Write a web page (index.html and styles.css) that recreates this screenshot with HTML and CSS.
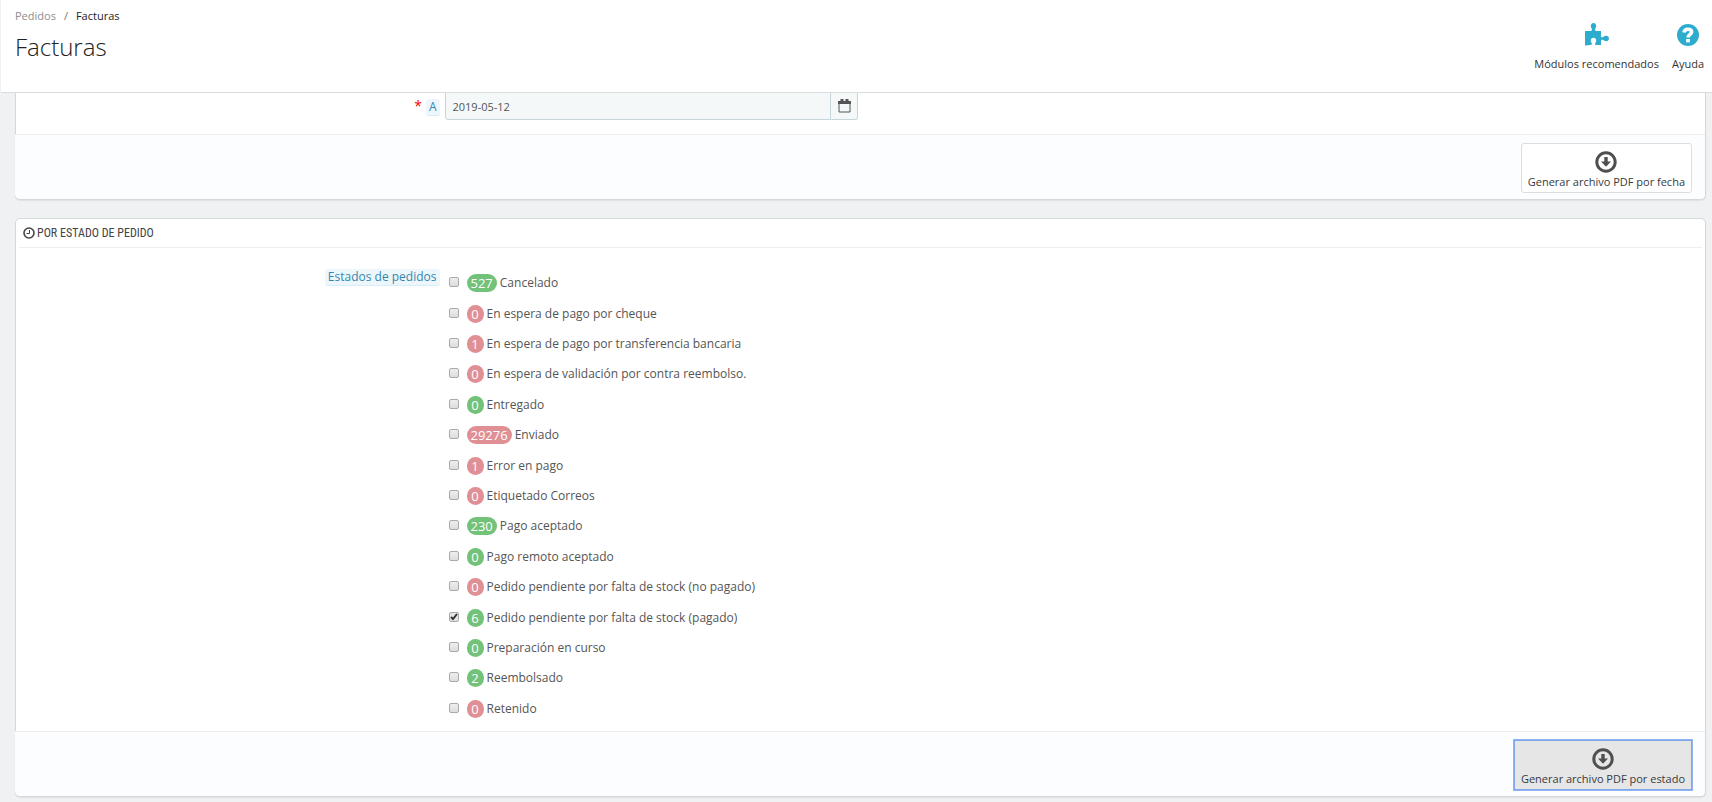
FILE: index.html
```html
<!DOCTYPE html>
<html lang="es">
<head>
<meta charset="utf-8">
<title>Facturas</title>
<link rel="stylesheet" href="styles.css">
</head>
<body>

<header class="page-head">
  <div>
    <nav class="breadcrumb">
      <a href="#">Pedidos</a>
      <span class="sep">/</span>
      <a href="#" class="current">Facturas</a>
    </nav>
    <h1 class="page-title">Facturas</h1>
  </div>
  <div class="toolbar">
    <a href="#" class="toolbar-btn">
      <svg class="toolbar-icon" viewBox="0 0 24 24"><path d="M0 8H5.500C7 8 7.300 7 6.800 5.800C6.200 4.700 5.800 4 5.800 2.900C5.800 1.200 7 0 8.500 0S11.200 1.200 11.200 2.900C11.200 4 10.800 4.700 10.200 5.800C9.700 7 10 8 11.500 8H16V13C16 14.500 17 14.700 18.200 14C19.300 13.200 19.900 12.700 21 12.700C22.800 12.700 24 13.900 24 15.500S22.800 18.300 21 18.300C19.900 18.300 19.300 17.800 18.200 17.100C17 16.400 16 16.700 16 18.200V22H11.500C10 22 9.700 21.200 10.300 20C10.900 19 11.200 18.600 11.200 17.400C11.200 15.800 10.200 14.700 8.500 14.700S5.800 15.800 5.800 17.400C5.800 18.600 6.100 19 6.700 20C7.300 21.200 6.800 21.800 5.500 22L0 22.500Z"/></svg>
      Módulos recomendados
    </a>
    <a href="#" class="toolbar-btn">
      <svg class="toolbar-icon" viewBox="0 0 24 24"><circle cx="12" cy="12" r="11"/><path class="mark" d="M8 9.500C8.300 7.300 9.700 6.300 12 6.300C14.300 6.300 15.600 7.400 15.600 9.100C15.600 11.400 12 11.400 12 14.600"/><rect class="dot" x="10.200" y="16" width="3.600" height="3.400"/></svg>
      Ayuda
    </a>
  </div>
</header>

<main class="content">
  <form class="panel">
    <div class="form-group form-date">
      <label class="control-label required" for="date_to"><span class="label-tooltip">A</span></label>
      <div class="input-group">
        <input type="text" id="date_to" class="form-control" value="2019-05-12">
        <span class="input-addon">
          <svg class="icon-calendar" viewBox="0 0 13 14"><path d="M1 3H12V13H1Z" class="line"/><path d="M0 2H13V5H0Z"/><path d="M2.500 0H5.500V3H2.500ZM7.500 0H10.500V3H7.500Z"/></svg>
        </span>
      </div>
    </div>
    <div class="panel-footer">
      <button type="button" class="btn">
        <svg class="btn-icon" viewBox="0 0 22 22"><circle cx="11" cy="11" r="9.200"/><path d="M9.300 6H12.700V10.500H16L11 15.700L6 10.500H9.300Z"/></svg>
        Generar archivo PDF por fecha
      </button>
    </div>
  </form>

  <form class="panel">
    <h3 class="panel-heading">
      <svg class="icon-time" viewBox="0 0 12 12"><circle cx="6" cy="6" r="5"/><path d="M6.500 3V6.500H3.500"/></svg>
      Por estado de pedido
    </h3>
    <div class="form-group">
      <div class="control-label"><span class="label-tooltip">Estados de pedidos</span></div>
      <div class="states">
        <label class="state"><input type="checkbox"><span class="badge badge-success">527</span> Cancelado</label>
        <label class="state"><input type="checkbox"><span class="badge badge-danger">0</span> En espera de pago por cheque</label>
        <label class="state"><input type="checkbox"><span class="badge badge-danger">1</span> En espera de pago por transferencia bancaria</label>
        <label class="state"><input type="checkbox"><span class="badge badge-danger">0</span> En espera de validación por contra reembolso.</label>
        <label class="state"><input type="checkbox"><span class="badge badge-success">0</span> Entregado</label>
        <label class="state"><input type="checkbox"><span class="badge badge-danger">29276</span> Enviado</label>
        <label class="state"><input type="checkbox"><span class="badge badge-danger">1</span> Error en pago</label>
        <label class="state"><input type="checkbox"><span class="badge badge-danger">0</span> Etiquetado Correos</label>
        <label class="state"><input type="checkbox"><span class="badge badge-success">230</span> Pago aceptado</label>
        <label class="state"><input type="checkbox"><span class="badge badge-success">0</span> Pago remoto aceptado</label>
        <label class="state"><input type="checkbox"><span class="badge badge-danger">0</span> Pedido pendiente por falta de stock (no pagado)</label>
        <label class="state"><input type="checkbox" checked><span class="badge badge-success">6</span> Pedido pendiente por falta de stock (pagado)</label>
        <label class="state"><input type="checkbox"><span class="badge badge-success">0</span> Preparación en curso</label>
        <label class="state"><input type="checkbox"><span class="badge badge-success">2</span> Reembolsado</label>
        <label class="state"><input type="checkbox"><span class="badge badge-danger">0</span> Retenido</label>
      </div>
    </div>
    <div class="panel-footer">
      <button type="button" class="btn btn-active">
        <svg class="btn-icon" viewBox="0 0 22 22"><circle cx="11" cy="11" r="9.200"/><path d="M9.300 6H12.700V10.500H16L11 15.700L6 10.500H9.300Z"/></svg>
        Generar archivo PDF por estado
      </button>
    </div>
  </form>
</main>

</body>
</html>
```
FILE: styles.css
```css
* {
  box-sizing: border-box;
}
body {
  margin: 0;
  background: #eff1f2;
  color: #555;
  font-family: "Open Sans", Helvetica, Arial, sans-serif;
  font-size: 12px;
  line-height: 18px;
}
a {
  color: inherit;
  text-decoration: none;
}

/* header */
.page-head {
  position: sticky;
  top: 0;
  z-index: 10;
  display: flex;
  justify-content: space-between;
  height: 93px;
  margin-left: 1px;
  padding: 7px 8px 0 14px;
  background: #fff;
  border-bottom: 1px solid #d9dbdd;
}
.breadcrumb {
  display: flex;
  gap: 8px;
  font-size: 11px;
  color: #8d8f92;
}
.breadcrumb .current {
  color: #222;
}
.breadcrumb .sep {
  color: #777;
}
.page-title {
  margin: 6px 0 0;
  font-size: 24px;
  font-weight: 300;
  line-height: 32px;
  color: #222;
}
.toolbar {
  display: flex;
  gap: 13px;
  padding-top: 16px;
}
.toolbar-btn {
  display: flex;
  flex-direction: column;
  align-items: center;
  gap: 8px;
  font-size: 11px;
  color: #333;
}
.toolbar-icon {
  width: 24px;
  height: 24px;
  fill: #2eacce;
}
.toolbar-icon .mark {
  fill: none;
  stroke: #fff;
  stroke-width: 3.6;
}
.toolbar-icon .dot {
  fill: #fff;
}

/* panels */
.content {
  margin-top: -5px;
  padding: 0 6px 0 15px;
}
.panel {
  margin-bottom: 18px;
  background: #fff;
  border: 1px solid #d3d8db;
  border-radius: 5px;
  box-shadow: 0 1px 1px #dfe1e3;
}
.panel-heading {
  display: flex;
  align-items: center;
  gap: 2px;
  margin: 0 3px 20px;
  padding: 0 4px;
  height: 29px;
  border-bottom: 1px solid #eee;
  font-family: "Ubuntu Condensed", "Roboto Condensed", Roboto, sans-serif;
  font-size: 12px;
  font-weight: 400;
  text-transform: uppercase;
  color: #444;
}
.icon-time {
  width: 12px;
  height: 12px;
  fill: none;
  stroke: #444;
  stroke-width: 1.6;
}
.icon-time path {
  stroke-width: 1;
}
.panel-footer {
  display: flex;
  justify-content: flex-end;
  height: 65px;
  margin-left: -1px;
  padding: 8px 13px 0 0;
  background: #fcfdfe;
  border-top: 1px solid #eee;
  border-radius: 0 0 5px 5px;
}

/* form */
.form-group {
  display: grid;
  grid-template-columns: 1fr 3fr;
  column-gap: 5px;
  padding: 0 20px 0 10px;
}
.form-date {
  padding-bottom: 14px;
}
.control-label {
  text-align: right;
}
.form-date .control-label {
  padding-top: 8px;
}
.required::before {
  content: "*";
  margin-right: 4px;
  font-size: 14px;
  color: #f00;
}
.label-tooltip {
  display: inline-block;
  padding: 0 3px;
  line-height: 16px;
  background: #edf7fb;
  border-bottom: 1px solid #d8eef7;
  border-radius: 3px;
  color: #3586ae;
}
.input-group {
  display: flex;
  width: calc(100% / 3);
  height: 31px;
}
.form-control {
  flex: 1;
  min-width: 0;
  padding: 7px 7px 3px;
  background: #f5f8f9;
  border: 1px solid #c7d6db;
  border-radius: 3px 0 0 3px;
  font: inherit;
  font-size: 11px;
  color: #555;
}
.input-addon {
  display: flex;
  align-items: center;
  justify-content: center;
  width: 27px;
  padding-top: 2px;
  background: #f5f8f9;
  border: 1px solid #c7d6db;
  border-left: 0;
  border-radius: 0 3px 3px 0;
}
.icon-calendar {
  width: 13px;
  height: 14px;
  fill: #555;
}
.icon-calendar .line {
  fill: none;
  stroke: #555;
}

.states {
  display: grid;
  grid-auto-rows: 1fr;
  min-height: 456px;
  padding: 0 4px;
  margin-bottom: 7px;
}
.state {
  display: flex;
  align-items: center;
  gap: 3px;
}
.state input {
  appearance: none;
  width: 10px;
  height: 10px;
  margin: 0 5px 2px 0;
  background: linear-gradient(#eee, #ddd);
  border: 1px solid #aaa;
  border-radius: 2px;
}
.state input:checked {
  background: #e4e4e4 url("data:image/svg+xml,%3Csvg xmlns='http://www.w3.org/2000/svg' viewBox='0 0 8 8'%3E%3Cpath d='M1 4l2 2 4-5' fill='none' stroke='%23333' stroke-width='2'/%3E%3C/svg%3E");
}
.badge {
  min-width: 17px;
  padding: 0 4px;
  border-radius: 9px;
  font-size: 13px;
  text-align: center;
  color: #fff;
}
.badge-success {
  background: #72c279;
}
.badge-danger {
  background: #e08f95;
}

/* buttons */
.btn {
  display: flex;
  flex-direction: column;
  align-items: center;
  height: 50px;
  padding: 7px 6px 0;
  background: #fff;
  border: 1px solid #ddd;
  border-radius: 3px;
  font: inherit;
  font-size: 11px;
  line-height: 18px;
  color: #363a41;
}
.btn-active {
  background: #e6e6e6;
  border-color: #7ea6e8;
  border-radius: 0;
  outline: 1px solid #8fb4f0;
}
.btn-icon {
  width: 22px;
  height: 22px;
  fill: #4f4f4f;
}
.btn-icon circle {
  fill: none;
  stroke: #4f4f4f;
  stroke-width: 3;
}
```
